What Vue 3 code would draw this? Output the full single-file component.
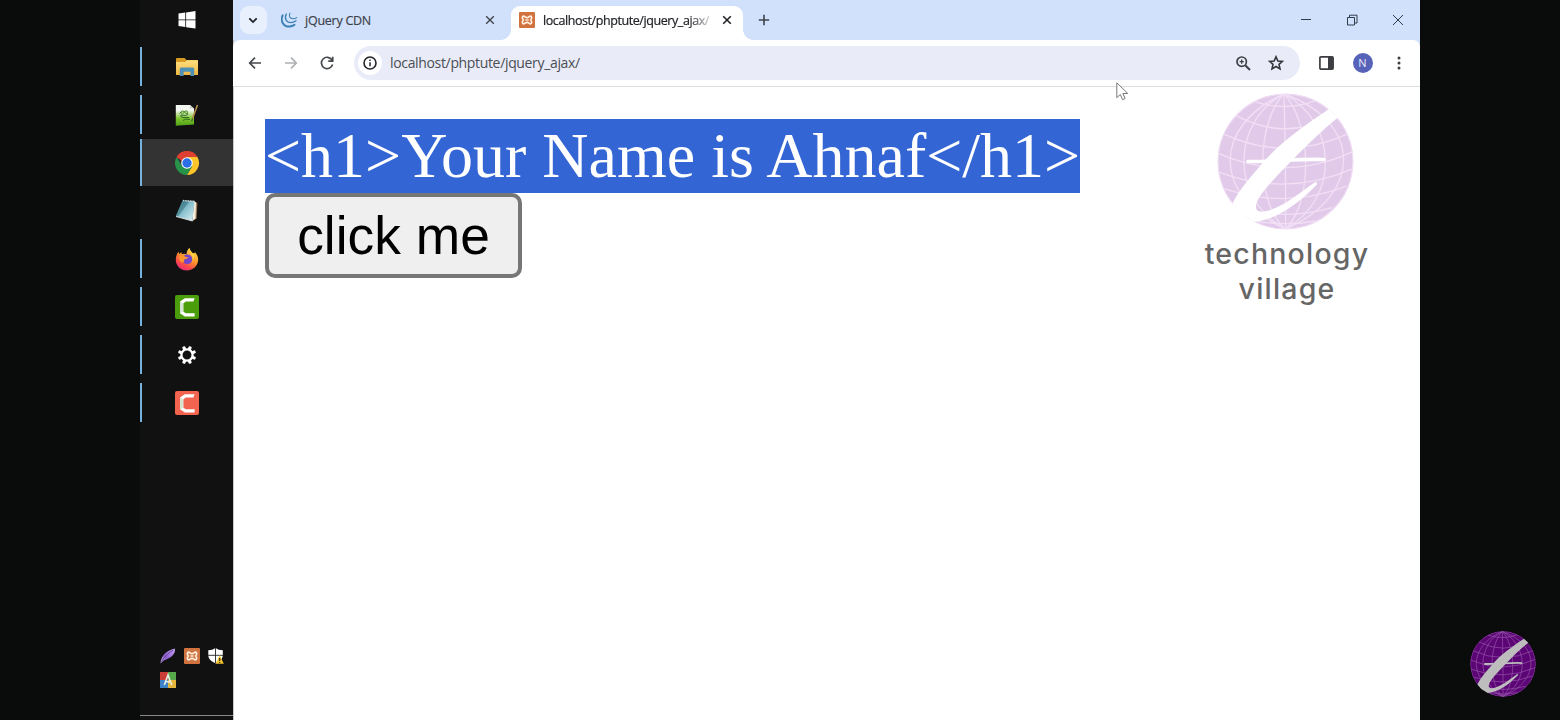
<script setup>
const apps = [
  { id: 'explorer', running: true },
  { id: 'notepadpp', running: true },
  { id: 'chrome', running: true, active: true },
  { id: 'notepad', running: false },
  { id: 'firefox', running: true },
  { id: 'camtasia', running: true },
  { id: 'settings', running: true },
  { id: 'recorder', running: true },
]
const heading = '<h1>Your Name is Ahnaf</h1>'
const teeth = [0, 45, 90, 135, 180, 225, 270, 315]
</script>

<template>
  <div class="screen">
    <svg class="defs" width="0" height="0">
      <defs>
        <clipPath id="ball"><circle cx="285" cy="230" r="203" /></clipPath>
        <linearGradient id="folder" x1="0" y1="0" x2="0" y2="1"><stop offset="0" stop-color="#ffdf7e" /><stop offset="1" stop-color="#edb644" /></linearGradient>
        <linearGradient id="npp" x1="0" y1="0" x2="0" y2="1"><stop offset=".25" stop-color="#f4f6f2" /><stop offset=".65" stop-color="#7cc52c" /><stop offset="1" stop-color="#4f9f18" /></linearGradient>
        <linearGradient id="pad" x1="0" y1="0" x2="1" y2="1"><stop offset="0" stop-color="#3f8796" /><stop offset=".5" stop-color="#8cc3d0" /><stop offset="1" stop-color="#e0f1f5" /></linearGradient>
        <linearGradient id="fox" x1=".8" y1="0" x2=".25" y2="1"><stop offset="0" stop-color="#ffe34b" /><stop offset=".45" stop-color="#ff9a2b" /><stop offset=".75" stop-color="#fb4a48" /><stop offset="1" stop-color="#e4287c" /></linearGradient>
        <linearGradient id="feather" x1="1" y1="0" x2="0" y2="1"><stop offset="0" stop-color="#c9a4f4" /><stop offset=".6" stop-color="#8d5fd0" /><stop offset="1" stop-color="#c9b3e8" /></linearGradient>
      </defs>
      <symbol id="globe" viewBox="80 25 410 410">
        <circle class="ball" cx="285" cy="230" r="203" />
        <g class="grid" clip-path="url(#ball)" fill="none">
          <circle cx="285" cy="230" r="202" />
          <path d="M280 28C70 120 60 330 285 432M280 28C125 110 115 340 285 432M280 28C200 110 190 350 285 432M280 28C284 110 286 350 285 432M280 28C362 110 370 350 285 432M280 28C440 110 450 340 285 432M280 28C515 110 520 330 285 432" />
          <path d="M190 50Q285 82 375 48M136 92Q285 172 434 92M100 148Q285 232 470 148M82 205Q285 295 488 200M86 262Q285 338 486 252M104 312Q285 374 468 304M145 368Q285 408 425 368M190 408Q285 424 380 408" />
        </g>
        <path class="swoosh" d="M415 73C330 130 270 175 228 222C190 266 145 315 126 357L150 385L190 410C260 405 325 355 379 299Q381 290 372 293C320 330 270 372 220 380C194 384 190 366 206 338C232 298 270 263 309 222C350 180 397 134 442 98Z" />
        <path class="cross" d="M173 230C250 231 330 221 400 224" />
      </symbol>
      <symbol id="xampp" viewBox="0 0 16 16">
        <rect width="16" height="16" rx="1" fill="#d0733f" />
        <path d="M4.5 4.2C3 4.2 3 6.5 4.3 8C3 9.5 3 11.8 4.5 11.8C6 11.8 6.2 10.3 8 10.3S10 11.8 11.5 11.8C13 11.8 13 9.5 11.7 8C13 6.5 13 4.2 11.5 4.2C10 4.2 9.8 5.7 8 5.7S6 4.2 4.5 4.2Z" fill="none" stroke="#fff0e0" stroke-width="1.7" />
        <path d="M6.3 8H9.7" stroke="#fff0e0" stroke-width="1.4" />
      </symbol>
      <symbol id="cam" viewBox="0 0 24 24">
        <path d="M19.6 3.2H9.8L5 6.6V18.2L9.8 21.4H19.6V18.2H10.8L8.3 16.4V8.4L10.8 6.4H18.4Z" fill="#fff" />
        <path d="M5 6.6L8.3 8.4V16.4L5 18.2Z" fill="#d8e4d2" />
      </symbol>
    </svg>

    <aside class="taskbar">
      <div class="start">
        <svg width="18" height="18" viewBox="0 0 18 18" fill="#fff"><path d="M.5 2.5L7.3 1.5V8.4H.5ZM8.1 1.4L17.5 0V8.4H8.1ZM.5 9.2H7.3V16L.5 15ZM8.1 9.2H17.5V17.6L8.1 16.2Z" /></svg>
      </div>
      <div v-for="app in apps" :key="app.id" class="app" :class="{ running: app.running, active: app.active }">
        <svg v-if="app.id === 'explorer'" width="24" height="24" viewBox="0 0 24 24">
          <path d="M1 4Q1 3 2 3H9.5L11.5 5H22Q23 5 23 6V20H1Z" fill="#d69a22" />
          <path d="M1 7H10L12 5.3H23V19.5Q23 20 22 20H2Q1 20 1 19Z" fill="url(#folder)" />
          <path d="M4.8 21V14Q4.8 12.5 6.3 12.5H17.7Q19.2 12.5 19.2 14V21H15.4V16.8H8.6V21Z" fill="#4e91b5" />
        </svg>
        <svg v-else-if="app.id === 'notepadpp'" width="24" height="24" viewBox="0 0 24 24">
          <path d="M.8 2H15L19 5.5V21.5L.8 22.8Z" fill="url(#npp)" />
          <path d="M15 2V5.5H19Z" fill="#c9cfc6" />
          <path d="M4.5 10.5Q8 7 12 10Q14 12 10.5 12.5L6 12Q5 14 8 14.5H14M8 17.5Q10 15 15 16.5" fill="none" stroke="#2f6a22" stroke-width="1" />
          <circle cx="7.5" cy="9.2" r="1.4" fill="#a5e36a" stroke="#2f6a22" stroke-width=".6" /><circle cx="11.2" cy="9.2" r="1.4" fill="#a5e36a" stroke="#2f6a22" stroke-width=".6" />
          <path d="M22.5 2L17.5 15.5" stroke="#b28b4a" stroke-width="1.6" /><path d="M17.5 15.5L16.7 18.3" stroke="#403a2c" />
        </svg>
        <svg v-else-if="app.id === 'chrome'" width="26" height="26" viewBox="0 0 26 26">
          <path d="M13 13L2.6 7A12 12 0 0 1 23.4 7Z" fill="#de4032" /><path d="M13 13H13L23.4 7A12 12 0 0 1 13 25L18.2 16Z" fill="#fdc52a" />
          <path d="M13 13L18.2 16L13 25A12 12 0 0 1 2.6 7L7.8 16Z" fill="#279349" /><path d="M13 7H23.4L18.2 16Z" fill="#fdc52a" /><path d="M2.6 7A12 12 0 0 1 23.4 7H13L8 11Z" fill="#de4032" />
          <circle cx="13" cy="13" r="5.8" fill="#fff" /><circle cx="13" cy="13" r="4.7" fill="#2c6ee5" />
        </svg>
        <svg v-else-if="app.id === 'notepad'" width="24" height="24" viewBox="0 0 24 24">
          <path d="M19.5 2.5L22.4 4L21.6 19.5L17.5 22Z" fill="#9c7c52" /><path d="M19 2L21 3.5L20.5 19.5L17.5 22Z" fill="#f3eee0" />
          <path d="M7.5 1.5L19.5 2.3L17.5 22L.8 17.3Z" fill="url(#pad)" /><path d="M8 1.5L19.5 2.2" stroke="#e7eeee" stroke-width="1.3" stroke-dasharray="1 .7" />
          <path d="M14 3L3 17.5L.8 17.3L7.5 1.5Z" fill="#27616e" opacity=".45" /><path d="M1 17.5L17.5 22" stroke="#fff" stroke-width=".8" />
        </svg>
        <svg v-else-if="app.id === 'firefox'" width="24" height="24" viewBox="0 0 24 24">
          <path d="M12 23.5C5.5 23.5.7 18.5.8 12.5C.9 9 2 6.5 3.7 4.8L4.1 7.2L6.3 4.9L6.8 7.2Q9.5 6.4 11.5 7.5C11.6 4.5 12.5 2.5 14.5.7C14.7 3.5 17 4.8 18.5 7L20 5.3C22.3 8 23.4 10.5 23.1 13.5C22.6 19.3 17.6 23.5 12 23.5Z" fill="url(#fox)" />
          <circle cx="12.3" cy="12.3" r="4.9" fill="#7546ca" /><path d="M4.5 9Q8.5 7.5 11 10L13.5 10.3Q12.5 12 10 12.2Q8.2 12.5 9.3 15L6 15.5Q3.5 12 4.5 9Z" fill="#ff962d" /><path d="M15 6Q19 9 17 14Q21 10 18.5 6Z" fill="#ffd044" />
        </svg>
        <svg v-else-if="app.id === 'settings'" width="20" height="20" viewBox="-10 -10 20 20">
          <rect v-for="a in teeth" :key="a" x="-1.6" y="-9.2" width="3.2" height="4" rx="1" fill="#fff" :transform="`rotate(${a + 22.5})`" />
          <circle r="5.6" fill="#111" stroke="#fff" stroke-width="2.3" />
        </svg>
        <svg v-else class="cam" :class="app.id" width="24" height="24"><use href="#cam" /></svg>
      </div>
      <div class="tray">
        <svg width="16" height="16" viewBox="0 0 16 16"><path d="M.5 15.5C1 8 6 2.5 14.8.5C16 5 12 10 4 12.2Z" fill="url(#feather)" /><path d="M.8 15C4 9 8 5 13.5 2" stroke="#493072" stroke-width=".7" fill="none" /></svg>
        <svg width="16" height="16"><use href="#xampp" /></svg>
        <svg width="16" height="16" viewBox="0 0 16 16"><path d="M7.5 0Q10.5 2.2 14.8 2.2V7C14.8 11 11.5 13.5 7.5 15.3C3.5 13.5.3 11 .3 7V2.2Q4.5 2.2 7.5 0Z" fill="#fff" /><path d="M7.5 0V15M0 7.3H15" stroke="#222" stroke-width=".9" /><path d="M11.7 7.3L15.8 15.8H7.6Z" fill="#f6c52e" /><path d="M11.7 10V13M11.7 14V15" stroke="#342b0a" stroke-width="1.2" /></svg>
        <svg width="16" height="16" viewBox="0 0 16 16"><path d="M0 0H8V8H0Z" fill="#ca3d36" /><path d="M8 0H16V8H8Z" fill="#57a84b" /><path d="M0 8H8V16H0Z" fill="#3c82c8" /><path d="M8 8H16V16H8Z" fill="#e4b63d" /><path d="M4.3 13L8 3L11.7 13M5.6 9.7H10.4" fill="none" stroke="#e9eee9" stroke-width="1.6" /></svg>
      </div>
    </aside>

    <main class="browser">
      <header class="tabs">
        <button class="search"><svg width="10" height="7" viewBox="0 0 10 7"><path d="M1.3 1.4L5 5.1L8.7 1.4" fill="none" stroke="#202226" stroke-width="1.8" /></svg></button>
        <div class="tab idle">
          <svg class="fav" width="17" height="16" viewBox="0 0 17 16" fill="none" stroke="#3d82b4" stroke-linecap="round"><path d="M1.6 3.3C-1 9 2.5 14.8 8.6 14.6Q11.5 14.4 13.5 12.8" stroke-width="2" /><path d="M5.3 2C3 6.5 5.5 10.6 9.6 10.6Q12.6 10.5 15 8.8" stroke-width="1.4" /><path d="M9 1.2C7.4 4 9 6.7 11.8 6.8Q14 6.8 15.8 5.6" stroke-width="1.1" /></svg>
          <span class="label">jQuery CDN</span>
          <svg class="x" width="10" height="10" viewBox="0 0 10 10"><path d="M1.2 1.2L8.8 8.8M8.8 1.2L1.2 8.8" stroke="#41454c" stroke-width="1.4" /></svg>
        </div>
        <div class="tab current">
          <svg class="fav" width="16" height="16"><use href="#xampp" /></svg>
          <span class="label">localhost/phptute/jquery_ajax/</span>
          <svg class="x" width="10" height="10" viewBox="0 0 10 10"><path d="M1.2 1.2L8.8 8.8M8.8 1.2L1.2 8.8" stroke="#202226" stroke-width="1.6" /></svg>
        </div>
        <svg class="plus" width="12" height="12" viewBox="0 0 12 12"><path d="M6 .8V11.2M.8 6H11.2" stroke="#3e444d" stroke-width="1.6" /></svg>
        <div class="controls">
          <svg width="12" height="12" viewBox="0 0 12 12"><path d="M1 5.5H11" /></svg>
          <svg width="12" height="12" viewBox="0 0 12 12"><path d="M1.5 3.5H8.5V11H1.5ZM3.5 3.2V1.2H11V9H8.8" /></svg>
          <svg width="12" height="12" viewBox="0 0 12 12"><path d="M1 1L11 11M11 1L1 11" /></svg>
        </div>
      </header>

      <nav class="toolbar">
        <div class="nav">
          <svg width="14" height="14" viewBox="0 0 14 14"><path d="M13 7H2M7 1.7L1.7 7L7 12.3" stroke="#45484c" /></svg>
          <svg width="14" height="14" viewBox="0 0 14 14"><path d="M1 7H12M7 1.7L12.3 7L7 12.3" stroke="#aeb0b3" /></svg>
          <svg width="14" height="14" viewBox="0 0 14 14"><path d="M12 4A5.7 5.7 0 1 0 12.6 8.6M12.7 .8V5.2H8.3" stroke="#45484c" /></svg>
        </div>
        <div class="omnibox">
          <span class="info"><svg width="14" height="14" viewBox="0 0 14 14"><circle cx="7" cy="7" r="6" fill="none" stroke="#222427" stroke-width="1.6" /><path d="M7 6.2V10.3M7 3.6V5.1" stroke="#222427" stroke-width="1.5" /></svg></span>
          <span class="url">localhost/phptute/jquery_ajax/</span>
          <svg class="magnify" width="15" height="15" viewBox="0 0 15 15" fill="none" stroke="#3d4045"><circle cx="5.7" cy="5.7" r="4.7" stroke-width="1.7" /><path d="M9.2 9.2L14 14" stroke-width="2" /><path d="M5.7 3.6V7.8M3.6 5.7H7.8" stroke-width="1.3" /></svg>
          <svg class="star" width="16" height="16" viewBox="0 0 16 16"><path d="M8 1.8L9.9 6L14.4 6.4L11 9.4L12 13.9L8 11.5L4 13.9L5 9.4L1.6 6.4L6.1 6Z" fill="none" stroke="#33363b" stroke-width="1.6" /></svg>
        </div>
        <svg class="panel" width="15" height="14" viewBox="0 0 15 14"><rect x=".9" y=".9" width="13.2" height="12.2" rx="1" fill="none" stroke="#3c3e42" stroke-width="1.7" /><path d="M9 1H14V13H9Z" fill="#3c3e42" /></svg>
        <span class="avatar">N</span>
        <svg class="dots" width="4" height="14" viewBox="0 0 4 14" fill="#3c3e42"><circle cx="2" cy="2" r="1.5" /><circle cx="2" cy="7" r="1.5" /><circle cx="2" cy="12" r="1.5" /></svg>
      </nav>

      <section class="page">
        <div class="content">
          <div class="result"><span>{{ heading }}</span></div>
          <button class="click">click me</button>
        </div>
        <div class="brand">
          <svg class="globe light" width="137" height="137"><use href="#globe" /></svg>
          <div class="brandname"><span>technology</span><span class="second">village</span></div>
        </div>
      </section>
    </main>

    <div class="margin"><svg class="globe dark" width="66" height="66"><use href="#globe" /></svg></div>
    <svg class="cursor" width="13" height="19" viewBox="0 0 13 19"><path d="M.8 .8V15.7L4.3 12.5L6.5 17.7L9.1 16.6L6.9 11.5H11.8Z" fill="#fff" stroke="#77797c" /></svg>
  </div>
</template>

<style>
html, body { background: #0a0c0b; overflow: hidden; }
</style>

<style scoped>
.screen { width: 1560px; height: 720px; position: relative; display: grid; grid-template-columns: 93px 1187px 140px; padding-left: 140px; box-sizing: border-box; background: #0a0c0b; font-family: "Open Sans", "Noto Sans", sans-serif; overflow: hidden; }
.defs { position: absolute; }
svg { display: block; flex: none; }
button { font: inherit; }
.taskbar { background: #111; display: flex; flex-direction: column; height: 720px; }
.start { height: 43px; display: grid; place-items: center; padding-bottom: 3px; box-sizing: border-box; }
.app { height: 48px; display: grid; place-items: center; position: relative; }
.app.active { background: linear-gradient(#333, #333) 0 0 / 100% 47px no-repeat; }
.app.running::before { content: ''; position: absolute; left: 0; top: 4px; width: 2px; height: 39px; background: #76b2e0; }
.app.active::before { top: 0; height: 47px; }
.cam { border-radius: 2px; }
.camtasia { background: #4b9d0b; }
.recorder { background: #f26350; }
.tray { margin: auto 0 4px; padding: 0 9px 27px 20px; border-bottom: 1px solid #85878a; display: grid; grid-template-columns: repeat(3, 16px); gap: 8px; }
.browser { background: linear-gradient(#d2e1fb 50px, #fff 50px); box-shadow: inset 1px 0 #c8c8ca; display: flex; flex-direction: column; }
.tabs { height: 40px; background: #d2e1fb; display: flex; align-items: flex-start; }
.search { margin: 6px 0 0 6.5px; width: 27px; height: 28px; padding: 0; border: 0; border-radius: 9px; background: #e9f0fd; display: grid; place-items: center; }
.tab { display: flex; align-items: center; font-size: 12.5px; color: #3e434b; white-space: nowrap; box-sizing: border-box; }
.idle { margin: 6px 0 0 14.5px; width: 214px; height: 28px; }
.idle .label { margin-left: 7px; flex: 1; letter-spacing: -.25px; -webkit-text-stroke: .2px; }
.current { margin: 6px 0 0 16px; width: 232px; height: 34px; padding: 0 11px 6px 8px; border-radius: 9px 9px 0 0; background: #fff; color: #202226; position: relative; }
.current::before, .current::after { content: ''; position: absolute; bottom: 0; width: 10px; height: 10px; }
.current::before { left: -10px; background: radial-gradient(circle at 0 0, transparent 9.5px, #fff 10px); }
.current::after { right: -10px; background: radial-gradient(circle at 100% 0, transparent 9.5px, #fff 10px); }
.current .label { margin-left: 8px; letter-spacing: -.42px; -webkit-text-stroke: .2px; mask-image: linear-gradient(90deg, #000 146px, transparent 172px); }
.current .x { margin-left: auto; }
.plus { margin: 14px 0 0 14.5px; }
.controls { margin: 14px 16.5px 0 auto; display: flex; gap: 34px; fill: none; stroke: #333c4b; stroke-width: 1; }
.toolbar { height: 46px; background: #fff; border-bottom: 1px solid #dcdde0; border-radius: 7px 7px 0 0; display: flex; align-items: center; }
.nav { display: flex; gap: 22px; margin-left: 15px; fill: none; stroke-width: 1.7; }
.omnibox { margin-left: 20px; width: 946px; height: 34px; border-radius: 17px; background: #e9ecf8; display: flex; align-items: center; }
.info { width: 24px; height: 24px; margin-left: 4px; border-radius: 50%; background: #fff; display: grid; place-items: center; }
.url { margin: -2px 0 0 8px; font-size: 14px; color: #4b4e54; letter-spacing: -.34px; flex: 1; }
.star { margin: 0 16px 0 17px; }
.panel { margin-left: 18.5px; }
.avatar { margin-left: 19px; width: 20px; height: 20px; border-radius: 50%; background: #5763b8; color: #e9ecff; font-size: 11px; line-height: 20px; text-align: center; }
.dots { margin-left: 24px; }
.page { flex: 1; display: flex; justify-content: space-between; }
.content { padding: 32px 0 0 32px; }
.result { font: 64px/74px "Liberation Serif", serif; color: #fff; white-space: nowrap; height: 74px; }
.result span { display: block; background: #3365d5; }
.click { display: block; width: 257px; height: 85px; padding: 0 0 1px; border: 4px solid #767676; border-radius: 10px; background: #efefef; color: #000; font: 53.33px "Liberation Sans", sans-serif; }
.brand { width: 180px; margin-right: 43px; padding-top: 6px; display: flex; flex-direction: column; align-items: center; }
.globe { overflow: visible; }
.light { color: #e1cae9; --line: #f1dff5; --mark: #fff; margin-right: 4px; }
.dark { color: #5c0676; --line: #9a58ac; --mark: #bdbdbd; }
.ball { fill: currentColor; }
.grid { stroke: var(--line); stroke-width: 4; }
.swoosh { fill: var(--mark); }
.cross { fill: none; stroke: var(--mark); stroke-width: 11; stroke-linecap: round; }
.brandname { margin-top: 6px; font: 500 28.5px/35px Inter, sans-serif; letter-spacing: 1.2px; color: #666; display: flex; flex-direction: column; align-items: center; }
.margin { display: flex; align-items: flex-end; padding: 0 0 23px 50px; }
.cursor { position: absolute; left: 1116px; top: 82px; }
</style>
